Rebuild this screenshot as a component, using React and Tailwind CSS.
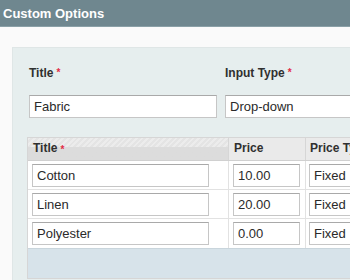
const rows = [
  { title: 'Cotton', price: '10.00', type: 'Fixed' },
  { title: 'Linen', price: '20.00', type: 'Fixed' },
  { title: 'Polyester', price: '0.00', type: 'Fixed' },
];

const inputCls =
  'h-[23px] bg-white border border-[#c6c6c6] border-t-[#a9a9a9] px-[4px] text-[13px] leading-[21px] text-[#2a2a2a] outline-none';

function Req() {
  return <span className="text-[#e22b45] text-[10px] align-top ml-[3px]">*</span>;
}

export default function App() {
  return (
    <div
      className="w-[350px] h-[280px] overflow-hidden bg-[#fafafa]"
      style={{ fontFamily: "'Liberation Sans', Arial, sans-serif" }}
    >
      {/* Section header */}
      <div className="h-[27px] bg-[#6f878f] border-b border-[#8aa0a7] flex items-center pl-[3px]">
        <span className="text-white font-bold text-[13px] leading-none">Custom Options</span>
      </div>

      <div className="pt-[20px] pl-[12px]">
        <div className="w-[400px] bg-[#e6eeee] border border-[#dfe6e6] pt-[18px] pb-[10px] pl-[16px]">
          {/* Option fields */}
          <div className="flex gap-[8px]">
            <div className="flex flex-col">
              <label className="text-[12px] font-bold text-[#303030] leading-[14px]">
                Title<Req />
              </label>
              <input readOnly value="Fabric" className={`${inputCls} w-[188px] mt-[15px] h-[22px]`} />
            </div>
            <div className="flex flex-col">
              <label className="text-[12px] font-bold text-[#303030] leading-[14px]">
                Input Type<Req />
              </label>
              <input readOnly value="Drop-down" className={`${inputCls} w-[200px] mt-[15px] h-[22px]`} />
            </div>
          </div>

          {/* Values table */}
          <div className="mt-[19px] -ml-[2px] border border-[#d6d6d6] bg-white w-[380px]">
            <div className="flex h-[23px] border-b border-[#d0d0d0] bg-[repeating-linear-gradient(135deg,#ececec_0px,#ececec_2px,#e4e4e4_2px,#e4e4e4_4px)]">
              <div className="w-[200px] pl-[5px] flex items-end pb-[3px] text-[12px] font-bold text-[#303030] bg-gradient-to-b from-transparent from-40% to-[#dcdcdc] to-40%">
                Title<Req />
              </div>
              <div className="w-[77px] border-l border-[#d6d6d6] pl-[5px] flex items-end pb-[3px] text-[12px] font-bold text-[#303030] bg-[#eaeaea]">
                Price
              </div>
              <div className="flex-1 border-l border-[#d6d6d6] pl-[4px] flex items-end pb-[3px] text-[12px] font-bold text-[#303030] bg-[#eaeaea]">
                Price Type
              </div>
            </div>
            {rows.map((r, i) => (
              <div key={r.title} className={`flex h-[29px] ${i < rows.length - 1 ? 'border-b border-[#e2e2e2]' : ''}`}>
                <div className="w-[200px] pl-[4px] flex items-center">
                  <input readOnly value={r.title} className={`${inputCls} w-[177px]`} />
                </div>
                <div className="w-[77px] border-l border-[#e2e2e2] pl-[4px] flex items-center">
                  <input readOnly value={r.price} className={`${inputCls} w-[67px]`} />
                </div>
                <div className="flex-1 border-l border-[#e2e2e2] pl-[3px] flex items-center">
                  <input readOnly value={r.type} className={`${inputCls} w-[80px]`} />
                </div>
              </div>
            ))}
            <div className="h-[30px] bg-[#d7e3ea] border-t border-[#c9d5dc]" />
          </div>
        </div>
      </div>
    </div>
  );
}
